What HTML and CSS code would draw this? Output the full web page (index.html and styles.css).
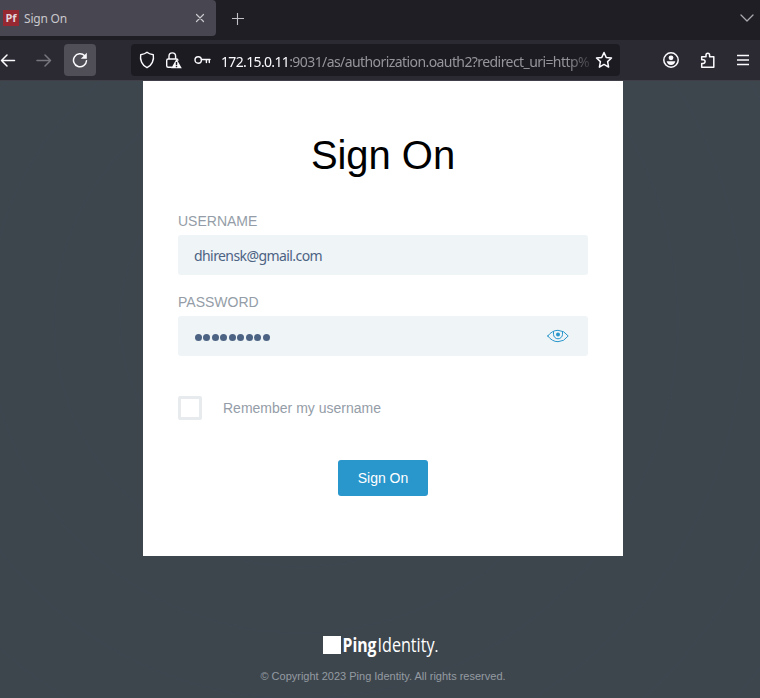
FILE: index.html
```html
<!DOCTYPE html>
<html lang="en">
<head>
<meta charset="utf-8">
<title>Sign On</title>
<link rel="stylesheet" href="styles.css">
</head>
<body>
<header class="browser">
  <div class="tabs">
    <div class="tab">
      <span class="favicon">Pf</span>
      <span class="tab-title">Sign On</span>
      <svg class="close" width="10" height="10" viewBox="0 0 10 10"><path d="M1.500 1.500l7 7M8.500 1.500l-7 7"/></svg>
    </div>
    <svg class="plus" width="12" height="12" viewBox="0 0 12 12"><path d="M5.500 0v12M0 5.500h12"/></svg>
    <svg class="chevron" width="14" height="8" viewBox="0 0 14 8"><path d="M1 1l6 6 6-6"/></svg>
  </div>
  <div class="toolbar">
    <svg class="back" width="16" height="16" viewBox="0 0 16 16"><path d="M14.500 8.500H1.500M7 3L1.500 8.500 7 14"/></svg>
    <svg class="forward" width="16" height="16" viewBox="0 0 16 16"><path d="M1 8.500h13.500M9 3l5.500 5.500L9 14"/></svg>
    <button class="reload"><svg width="16" height="16" viewBox="0 0 16 16"><path d="M12.700 3.800A6.500 6.500 0 1 0 14.500 8.700"/><path class="solid" d="M14.800.8v6H8.800z"/></svg></button>
    <div class="urlbar">
      <svg class="shield" width="16" height="18" viewBox="0 0 16 18"><path d="M8 1.200Q10 2.900 14.300 3.700C15.300 9 12.800 14.500 8 16.700 3.200 14.500.7 9 1.700 3.700Q6 2.900 8 1.200z"/></svg>
      <svg class="lock" width="17" height="18" viewBox="0 0 17 18"><path d="M4 8V5.200a3.300 3.300 0 0 1 6.600 0V8M6.500 16.200H3.200Q1.700 16.200 1.700 14.700V9.500Q1.700 8 3.200 8H11.400Q12.900 8 12.900 9.200"/><path class="solid" d="M11.500 8L16.800 17.300H6.200z"/><path class="mark" d="M11.500 11v3.200M11.500 15v1.200"/></svg>
      <svg class="key" width="17" height="10" viewBox="0 0 17 10"><circle cx="4.200" cy="5" r="3.200"/><path d="M7.400 4.500H16M12.400 4.500v3M15.300 4.500v3"/></svg>
      <div class="url"><span class="host">172.15.0.11</span>:9031/as/authorization.oauth2?redirect_uri=http%</div>
      <svg class="star" width="18" height="18" viewBox="0 0 18 18"><path d="M9 1.500l2.200 4.900 5.300.6-3.900 3.600 1 5.500L9 13.400l-4.600 2.700 1-5.500L1.500 7l5.300-.6z"/></svg>
    </div>
    <svg class="account" width="18" height="18" viewBox="0 0 18 18"><circle cx="9" cy="9" r="7.200"/><circle class="solid" cx="9" cy="6.800" r="2.400"/><path class="solid" d="M4.700 10.300h8.600Q12.700 13.900 9 13.900T4.700 10.300z"/></svg>
    <svg class="puzzle" width="16" height="18" viewBox="0 0 16 18"><path d="M1.700 8V5.800H6V4a1.800 1.800 0 0 1 3.600 0v1.800h4.200V16.200H1.700v-3.700h1.500a1.900 1.900 0 0 0 0-3.800H1.700z"/></svg>
    <svg class="menu" width="12" height="12" viewBox="0 0 12 12"><path d="M0 1.500h12M0 6h12M0 10.500h12"/></svg>
  </div>
</header>
<main class="page">
  <form class="card">
    <h1>Sign On</h1>
    <label class="label">USERNAME</label>
    <div class="field username">dhirensk@gmail.com</div>
    <label class="label second">PASSWORD</label>
    <div class="field password">
      <span class="dots"><i></i><i></i><i></i><i></i><i></i><i></i><i></i><i></i><i></i></span>
      <svg class="eye" width="22" height="14" viewBox="0 0 22 14"><path d="M.8 7Q5 1.300 11 1.300T21.200 7Q17 12.700 11 12.700T.8 7z"/><path d="M6.500 2.600V5.300a4.500 4.500 0 0 0 9 0V2.600"/><circle cx="11" cy="5.400" r="2"/></svg>
    </div>
    <div class="remember"><span class="check"></span><span>Remember my username</span></div>
    <button class="submit" type="button">Sign On</button>
  </form>
  <footer>
    <div class="logo">
      <span class="square"></span>
      <svg width="97" height="26" viewBox="0 0 97 26"><text class="ping" x="1.500" y="16" textLength="34" lengthAdjust="spacingAndGlyphs">Ping</text><text class="identity" x="36.500" y="16" textLength="57" lengthAdjust="spacingAndGlyphs">Identity</text><circle cx="95.500" cy="15" r="1.100"/></svg>
    </div>
    <p>© Copyright 2023 Ping Identity. All rights reserved.</p>
  </footer>
</main>
</body>
</html>
```
FILE: styles.css
```css
* { box-sizing: border-box; }
body { margin: 0; width: 760px; height: 698px; overflow: hidden; font-family: "Liberation Sans", Arial, sans-serif; }
svg { display: block; flex: none; fill: none; stroke: #fbfbfe; stroke-width: 1.5; stroke-linecap: round; stroke-linejoin: round; }
svg .solid { fill: #fbfbfe; stroke: none; }
button { border: 0; padding: 0; }
.browser { height: 81px; background: #2b2a33; border-bottom: 1px solid #403e46; font-family: "Noto Sans", sans-serif; }
.tabs { height: 40px; display: flex; align-items: flex-start; background: #1f1e25; }
.tab { width: 216px; height: 36px; display: flex; align-items: center; padding: 0 11px 0 3px; background: #484650; border-radius: 0 4px 4px 0; }
.favicon { width: 16px; height: 16px; background: #962832; color: #e1d5da; font: bold 11px/16px "Open Sans", sans-serif; text-align: center; }
.tab-title { margin-left: 5px; color: #c9c8cd; font-size: 12px; letter-spacing: -.2px; line-height: 18px; padding-top: 1px; }
.close { margin-left: auto; stroke: #c9c8cd; stroke-width: 1.2; }
.plus { margin: 13px 0 0 16px; stroke: #c1c0c6; stroke-width: 1.1; }
.chevron { margin: 14px 6px 0 auto; stroke: #aaa9af; stroke-width: 1.3; }
.toolbar { height: 40px; display: flex; align-items: center; }
.forward { margin-left: 20px; stroke: #77767d; }
.reload { width: 32px; height: 32px; margin-left: 12px; display: grid; place-items: center; border-radius: 4px; background: #504f57; }
.urlbar { width: 489px; height: 32px; margin-left: 35px; padding: 0 7px 0 8px; display: flex; align-items: center; border-radius: 4px; background: #1c1b22; }
.shield, .lock, .key { stroke-width: 1.4; }
.lock { margin-left: 10px; }
.lock .mark { stroke: #1c1b22; stroke-width: 1.4; stroke-linecap: butt; }
.key { margin-left: 12px; }
.url { width: 374px; margin: 3px -4px 0 10px; overflow: hidden; white-space: nowrap; color: #96959b; font-size: 14px; line-height: 24px; letter-spacing: -.58px; mask-image: linear-gradient(90deg, #000 345px, transparent 376px); }
.host { color: #fbfbfe; letter-spacing: -.65px; }
.star { margin-left: auto; }
.account { margin-left: 42px; }
.puzzle { margin-left: 20px; }
.menu { margin-left: 21px; stroke-linecap: butt; }
.page { height: 617px; background: repeating-radial-gradient(circle at 300px 240px, transparent 0 46px, rgba(55,67,82,.2) 47px 48px, transparent 50px 66px), #3e464d; }
.card { width: 480px; height: 475px; margin: 0 0 0 143px; padding: 49px 35px 0; display: flex; flex-direction: column; background: #fff; }
h1 { margin: 0; height: 50px; color: #000; font-size: 40px; line-height: 50px; font-weight: 400; text-align: center; letter-spacing: -.05px; }
.label { height: 20px; margin: 31px 0 4px; color: #949da7; font-size: 14px; line-height: 20px; }
.label.second { margin-top: 17px; }
.field { height: 40px; padding: 0 19px 0 16px; display: flex; align-items: center; background: #eff4f7; border-radius: 3px; color: #4c6383; }
.username { font-family: "Noto Sans", sans-serif; font-size: 14px; letter-spacing: -.58px; padding-top: 1px; }
.dots { display: flex; gap: 1.450px; padding: 3px 0 0 1px; }
.dots i { width: 7px; height: 7px; border-radius: 50%; background: #4c6383; }
.eye { margin-left: auto; stroke: #2996cc; stroke-width: 1; }
.eye circle { fill: #2996cc; stroke: none; }
.remember { height: 24px; margin-top: 40px; display: flex; align-items: center; gap: 21px; color: #949da7; font-size: 14px; }
.check { width: 24px; height: 24px; border: 3px solid #e7ebee; border-radius: 2px; }
.submit { width: 90px; height: 36px; margin-top: 40px; align-self: center; border-radius: 3px; background: #2996cc; color: #fff; font: 14px "Liberation Sans", Arial, sans-serif; }
footer { width: 480px; margin-left: 143px; padding-top: 80px; }
.logo { display: flex; margin-left: 180px; }
.square { width: 18px; height: 18px; background: #fff; }
.logo svg { overflow: visible; stroke: none; fill: #fff; font-family: "Open Sans", sans-serif; font-size: 20px; }
.ping { font-weight: 700; }
.identity { font-weight: 400; }
footer p { margin: 7px 0 0; color: #949ba2; font-size: 11px; line-height: 14px; text-align: center; }
```
